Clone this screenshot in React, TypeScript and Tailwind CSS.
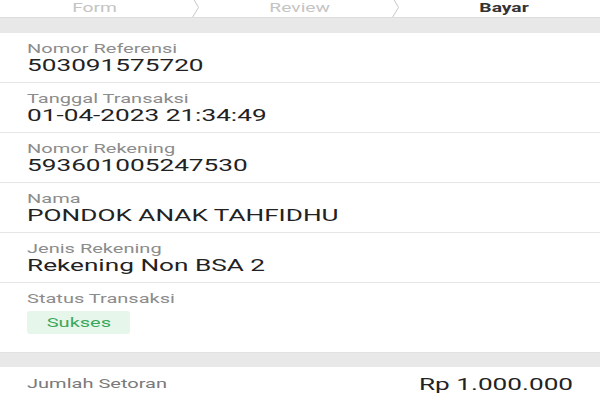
import React from "react";

// screenshot is stretched sideways, so text gets a horizontal scale
function Wide({ children, origin = "origin-left" }: { children: React.ReactNode; origin?: string }) {
  return <span className={`inline-block whitespace-nowrap scale-x-[1.54] ${origin}`}>{children}</span>;
}

function Chevron() {
  return (
    <svg width="10" height="17" viewBox="0 0 10 17" className="shrink-0" fill="none">
      <path d="M3 -2 L8.5 7.5 L2 18" stroke="#c8c8c8" strokeWidth="1" />
    </svg>
  );
}

const rows = [
  { label: "Nomor Referensi", value: "503091575720" },
  { label: "Tanggal Transaksi", value: "01-04-2023 21:34:49" },
  { label: "Nomor Rekening", value: "593601005247530" },
  { label: "Nama", value: "PONDOK ANAK TAHFIDHU" },
  { label: "Jenis Rekening", value: "Rekening Non BSA 2" },
];

export default function App() {
  return (
    <div className="h-[400px] w-[600px] overflow-hidden bg-white font-['Roboto',sans-serif]">
      {/* steps */}
      <div className="grid h-[18px] grid-cols-3 border-b border-[#dddddd] text-[12.5px]">
        <div className="flex h-[17px] items-center">
          <div className="flex-1 text-center leading-none text-[#c4c4c4]">
            <Wide origin="origin-center">Form</Wide>
          </div>
          <Chevron />
        </div>
        <div className="flex h-[17px] items-center">
          <div className="flex-1 pl-[10px] text-center leading-none text-[#c4c4c4]">
            <Wide origin="origin-center">Review</Wide>
          </div>
          <Chevron />
        </div>
        <div className="flex h-[17px] items-center">
          <div className="flex-1 pl-[8px] text-center font-bold leading-none text-[#333333]">
            <Wide origin="origin-center">Bayar</Wide>
          </div>
        </div>
      </div>
      <div className="h-[15px] bg-[#e8e8e8]" />

      {rows.map((r) => (
        <div key={r.label} className="border-b border-[#e6e6e6] px-[27px] pb-[8px] pt-[9px]">
          <div className="text-[13px] leading-[14px] text-[#8c8c8c]">
            <Wide>{r.label}</Wide>
          </div>
          <div className="text-[17px] leading-[18px] text-[#222222]">
            <Wide>{r.value}</Wide>
          </div>
        </div>
      ))}

      <div className="px-[27px] pb-[18px] pt-[9px]">
        <div className="text-[13px] leading-[14px] text-[#8c8c8c]">
          <Wide>Status Transaksi</Wide>
        </div>
        <div className="mt-[5px] flex h-[23px] w-[103px] items-center justify-center rounded-[3px] bg-[#e7f6ea] text-[13px] text-[#3aa85c]">
          <Wide origin="origin-center">Sukses</Wide>
        </div>
      </div>
      <div className="h-[15px] border-t border-[#e2e2e2] bg-[#e8e8e8]" />

      <div className="flex items-center justify-between px-[27px] pt-[8px]">
        <div className="text-[13px] leading-[16px] text-[#7a7a7a]">
          <Wide>Jumlah Setoran</Wide>
        </div>
        <div className="text-[17px] leading-[18px] text-[#222222]">
          <Wide origin="origin-right">Rp 1.000.000</Wide>
        </div>
      </div>
    </div>
  );
}
